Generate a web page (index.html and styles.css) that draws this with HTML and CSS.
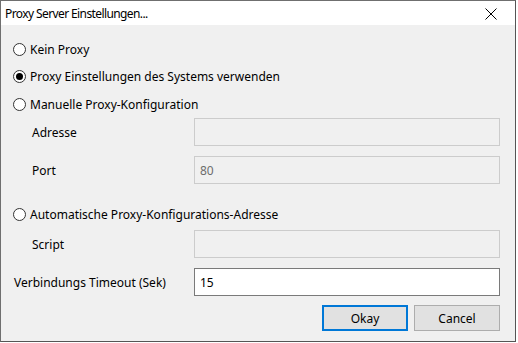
FILE: index.html
```html
<!DOCTYPE html>
<html>
  <head>
    <meta charset="utf-8" />
    <title>Proxy Server Einstellungen...</title>
    <link rel="stylesheet" href="styles.css">
  </head>
  <body>
    <div class="dialog">
      <div class="titlebar">
        <span class="title">Proxy Server Einstellungen...</span>
        <span class="close">
          <svg width="12" height="12" viewBox="0 0 12 12">
            <path d="M0.5 0.5 L11.5 11.5 M11.5 0.5 L0.5 11.5" stroke="#000" stroke-width="1" fill="none" />
          </svg>
        </span>
      </div>

      <div class="content">
        <label class="radio-row">
          <span class="radio"></span>
          <span>Kein Proxy</span>
        </label>
        <label class="radio-row">
          <span class="radio checked"></span>
          <span>Proxy Einstellungen des Systems verwenden</span>
        </label>
        <label class="radio-row third">
          <span class="radio"></span>
          <span>Manuelle Proxy-Konfiguration</span>
        </label>

        <div class="field">
          <span class="field-label indent">Adresse</span>
          <div class="input disabled"></div>
        </div>
        <div class="field gap">
          <span class="field-label indent">Port</span>
          <div class="input disabled">80</div>
        </div>

        <label class="radio-row auto">
          <span class="radio"></span>
          <span>Automatische Proxy-Konfigurations-Adresse</span>
        </label>

        <div class="field script">
          <span class="field-label indent">Script</span>
          <div class="input disabled"></div>
        </div>
        <div class="field gap">
          <span class="field-label">Verbindungs Timeout (Sek)</span>
          <div class="input">15</div>
        </div>

        <div class="buttons">
          <button class="button default">Okay</button>
          <button class="button">Cancel</button>
        </div>
      </div>
    </div>
  </body>
</html>
```

FILE: styles.css
```css
body {
  margin: 0;
  padding: 0;
  background-color: #ffffff;
  font-family: "Noto Sans", Arial, sans-serif;
  font-size: 12px;
  color: #000000;
}

.dialog {
  width: 514px;
  height: 340px;
  border: 1px solid #6f6f6f;
  border-right-color: #555555;
  border-bottom-color: #555555;
  background-color: #f0f0f0;
}

.titlebar {
  height: 24px;
  background-color: #ffffff;
  display: flex;
  align-items: center;
  padding-left: 4px;
  padding-right: 18px;
}

.title {
  flex: 1;
  letter-spacing: -0.6px;
}

.close {
  display: flex;
  margin-top: 2px;
}

.content {
  padding: 11px 15px 0 11px;
}

.radio-row {
  display: flex;
  align-items: center;
  height: 27px;
}

.radio-row.third {
  height: 28px;
}

.radio-row.auto {
  height: 28px;
  margin-top: 16px;
}

.radio {
  width: 11px;
  height: 11px;
  border: 1px solid #333333;
  border-radius: 50%;
  background-color: #ffffff;
  margin-right: 4px;
  margin-left: 1px;
  position: relative;
}

.radio.checked::after {
  content: "";
  position: absolute;
  left: 2px;
  top: 2px;
  width: 7px;
  height: 7px;
  border-radius: 50%;
  background-color: #000000;
}

.field {
  display: flex;
  align-items: center;
}

.field.gap {
  margin-top: 10px;
}

.field.script {
  margin-top: 2px;
}

.field-label {
  width: 180px;
  padding-left: 2px;
}

.field-label.indent {
  width: 162px;
  padding-left: 20px;
}

.input {
  flex: 1;
  height: 26px;
  border: 1px solid #7a7a7a;
  background-color: #ffffff;
  display: flex;
  align-items: center;
  padding-left: 5px;
}

.input.disabled {
  border-color: #cccccc;
  background-color: #f0f0f0;
  color: #6d6d6d;
}

.buttons {
  display: flex;
  justify-content: flex-end;
  gap: 6px;
  margin-top: 9px;
}

.button {
  width: 86px;
  height: 26px;
  border: 1px solid #adadad;
  background-color: #e1e1e1;
  font-family: "Noto Sans", Arial, sans-serif;
  font-size: 12px;
  color: #000000;
  padding: 0;
}

.button.default {
  border: 2px solid #0078d7;
}
```
